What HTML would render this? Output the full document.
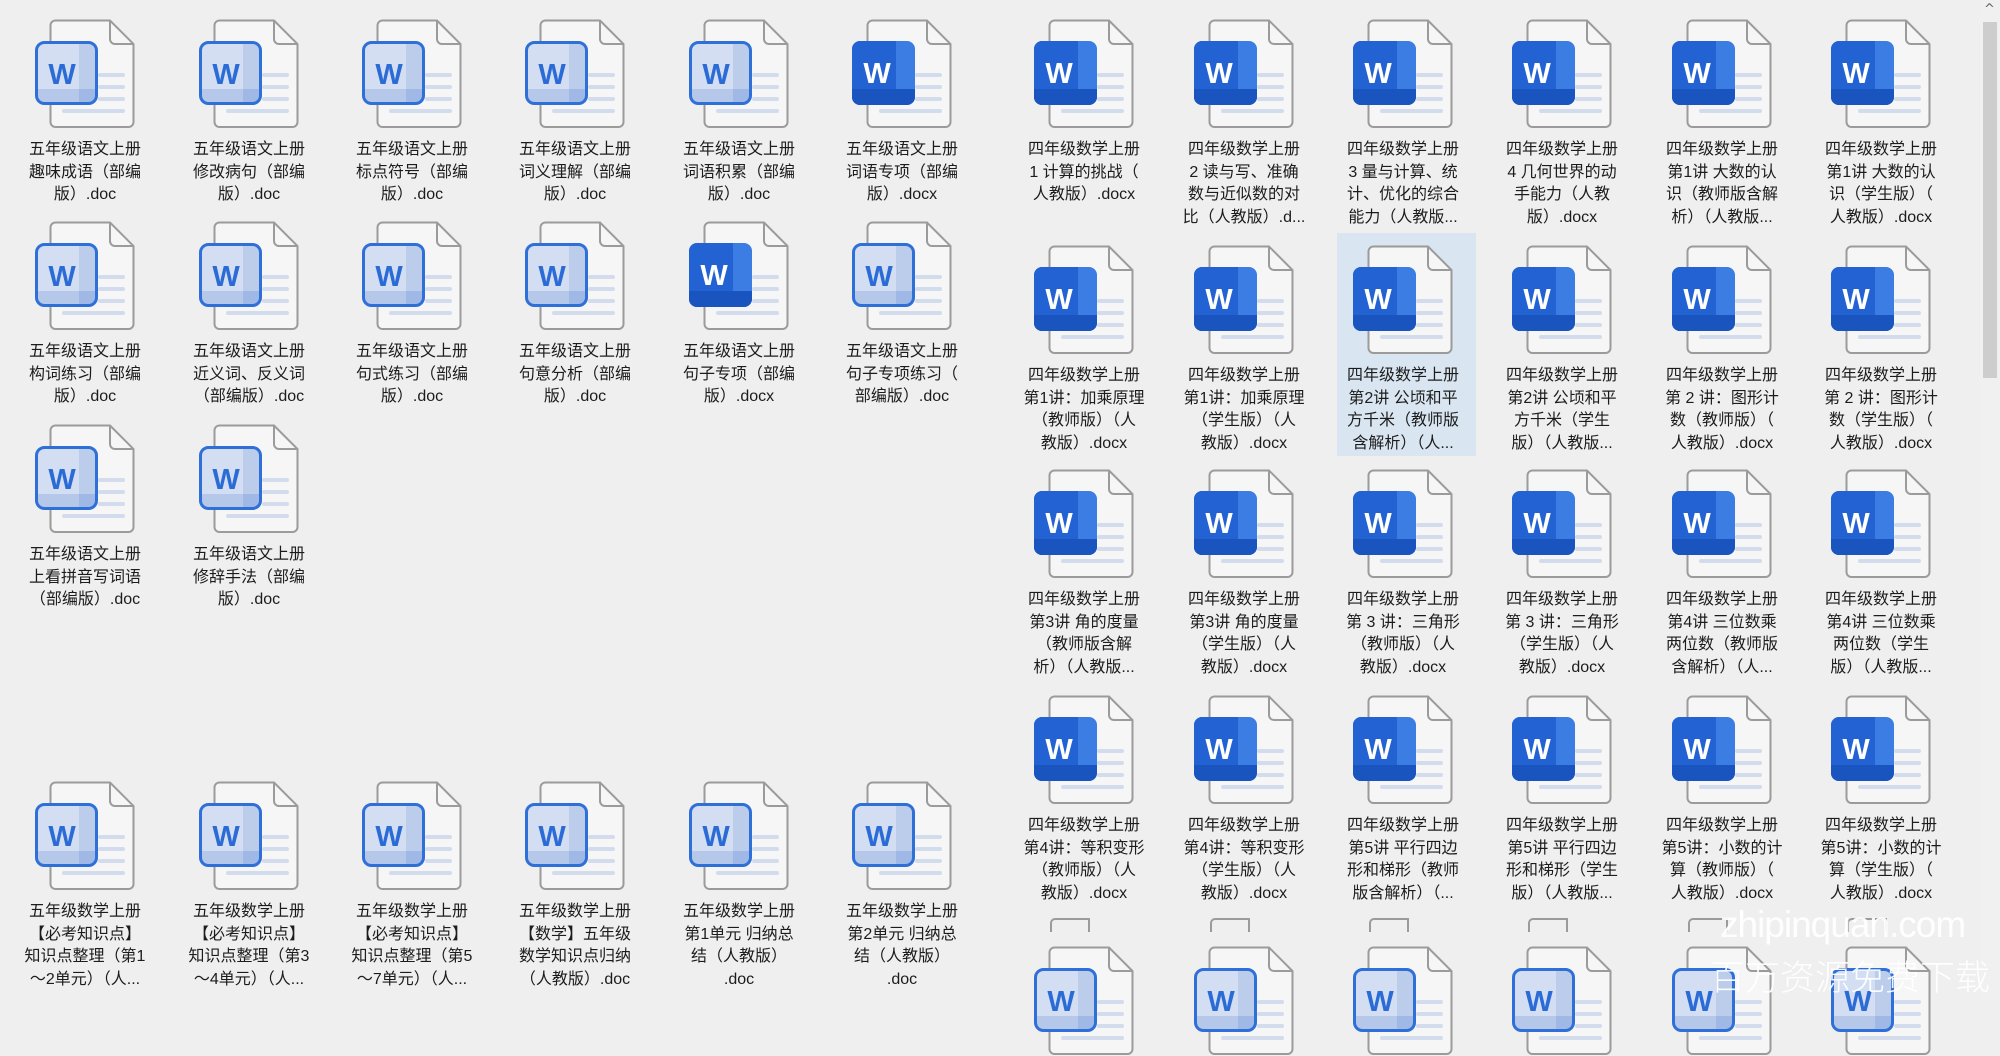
<!DOCTYPE html>
<html><head><meta charset="utf-8">
<style>
html,body{margin:0;padding:0;}
body{width:2000px;height:1000px;position:relative;overflow:hidden;background:#efefef;font-family:"Liberation Sans","Noto Sans CJK SC",sans-serif;}
.c{position:absolute;width:150px;}
.c svg{display:block;margin:0 auto;width:100px;height:110px;}
.t{margin-top:10px;text-align:center;font-size:16px;line-height:22.6px;color:#1c1c1c;white-space:nowrap;}
.hl{position:absolute;left:1337px;top:233px;width:139px;height:223px;background:#d9e6f2;}
.sb{position:absolute;left:1980px;top:0;width:20px;height:1000px;background:#f0f0f0;}
.th{position:absolute;left:1983px;top:22px;width:14px;height:356px;background:#cdcdcd;}
.wm{position:absolute;color:rgba(255,255,255,0.93);font-weight:300;white-space:nowrap;}
</style></head><body>
<svg width="0" height="0" style="position:absolute">
<defs>
<symbol id="pg" viewBox="0 0 100 110">
<path d="M20.5 1.5H75L98.5 25V103a5 5 0 0 1-5 5H20.5a5 5 0 0 1-5-5V6.5a5 5 0 0 1 5-5Z" fill="#f6f6f6" stroke="#9b9b9b" stroke-width="2"/>
<path d="M75 1.5V20a5 5 0 0 0 5 5H98.5" fill="none" stroke="#9b9b9b" stroke-width="2"/>
<rect x="63" y="54" width="27" height="4" rx="2" fill="#d3dcec"/>
<rect x="63" y="66" width="27" height="4" rx="2" fill="#d3dcec"/>
<rect x="63" y="78" width="27" height="4" rx="2" fill="#d3dcec"/>
<rect x="27" y="90" width="63" height="4" rx="2" fill="#d3dcec"/>
</symbol>
<symbol id="lw" viewBox="0 0 100 110">
<use href="#pg"/>
<rect x="1.5" y="23.5" width="60" height="61" rx="8" fill="#d3def3"/>
<rect x="44" y="25" width="16" height="58" fill="#bccdec"/>
<rect x="3" y="70" width="57" height="13" fill="#b5c8ea"/>
<rect x="44" y="70" width="16" height="13" fill="#9fb8e6"/>
<rect x="1.5" y="23.5" width="60" height="61" rx="8" fill="none" stroke="#2f6fd8" stroke-width="3"/>
<text x="27" y="65" font-family="Liberation Sans,sans-serif" font-weight="bold" font-size="29" fill="#2b6bd6" text-anchor="middle">W</text>
</symbol>
<symbol id="sw" viewBox="0 0 100 110">
<use href="#pg"/>
<rect x="0" y="22" width="63" height="64" rx="8" fill="#3b7de2"/>
<path d="M8 22H44V86H8a8 8 0 0 1-8-8V30a8 8 0 0 1 8-8Z" fill="#2262d2"/>
<path d="M0 70H63V78a8 8 0 0 1-8 8H8a8 8 0 0 1-8-8Z" fill="#1a55bf"/>
<text x="25" y="64" font-family="Liberation Sans,sans-serif" font-weight="bold" font-size="29" fill="#fff" text-anchor="middle">W</text>
</symbol>
</defs></svg>

<div class="hl"></div>

<!-- LEFT row1 -->
<div class="c" style="left:10px;top:19px"><svg><use href="#lw"/></svg><div class="t">五年级语文上册<br>趣味成语（部编<br>版）.doc</div></div>
<div class="c" style="left:174px;top:19px"><svg><use href="#lw"/></svg><div class="t">五年级语文上册<br>修改病句（部编<br>版）.doc</div></div>
<div class="c" style="left:337px;top:19px"><svg><use href="#lw"/></svg><div class="t">五年级语文上册<br>标点符号（部编<br>版）.doc</div></div>
<div class="c" style="left:500px;top:19px"><svg><use href="#lw"/></svg><div class="t">五年级语文上册<br>词义理解（部编<br>版）.doc</div></div>
<div class="c" style="left:664px;top:19px"><svg><use href="#lw"/></svg><div class="t">五年级语文上册<br>词语积累（部编<br>版）.doc</div></div>
<div class="c" style="left:827px;top:19px"><svg><use href="#sw"/></svg><div class="t">五年级语文上册<br>词语专项（部编<br>版）.docx</div></div>
<!-- LEFT row2 -->
<div class="c" style="left:10px;top:221px"><svg><use href="#lw"/></svg><div class="t">五年级语文上册<br>构词练习（部编<br>版）.doc</div></div>
<div class="c" style="left:174px;top:221px"><svg><use href="#lw"/></svg><div class="t">五年级语文上册<br>近义词、反义词<br>（部编版）.doc</div></div>
<div class="c" style="left:337px;top:221px"><svg><use href="#lw"/></svg><div class="t">五年级语文上册<br>句式练习（部编<br>版）.doc</div></div>
<div class="c" style="left:500px;top:221px"><svg><use href="#lw"/></svg><div class="t">五年级语文上册<br>句意分析（部编<br>版）.doc</div></div>
<div class="c" style="left:664px;top:221px"><svg><use href="#sw"/></svg><div class="t">五年级语文上册<br>句子专项（部编<br>版）.docx</div></div>
<div class="c" style="left:827px;top:221px"><svg><use href="#lw"/></svg><div class="t">五年级语文上册<br>句子专项练习（<br>部编版）.doc</div></div>
<!-- LEFT row3 -->
<div class="c" style="left:10px;top:424px"><svg><use href="#lw"/></svg><div class="t">五年级语文上册<br>上看拼音写词语<br>（部编版）.doc</div></div>
<div class="c" style="left:174px;top:424px"><svg><use href="#lw"/></svg><div class="t">五年级语文上册<br>修辞手法（部编<br>版）.doc</div></div>
<!-- LEFT row4 -->
<div class="c" style="left:10px;top:781px"><svg><use href="#lw"/></svg><div class="t">五年级数学上册<br>【必考知识点】<br>知识点整理（第1<br>～2单元）（人...</div></div>
<div class="c" style="left:174px;top:781px"><svg><use href="#lw"/></svg><div class="t">五年级数学上册<br>【必考知识点】<br>知识点整理（第3<br>～4单元）（人...</div></div>
<div class="c" style="left:337px;top:781px"><svg><use href="#lw"/></svg><div class="t">五年级数学上册<br>【必考知识点】<br>知识点整理（第5<br>～7单元）（人...</div></div>
<div class="c" style="left:500px;top:781px"><svg><use href="#lw"/></svg><div class="t">五年级数学上册<br>【数学】五年级<br>数学知识点归纳<br>（人教版）.doc</div></div>
<div class="c" style="left:664px;top:781px"><svg><use href="#lw"/></svg><div class="t">五年级数学上册<br>第1单元 归纳总<br>结（人教版）<br>.doc</div></div>
<div class="c" style="left:827px;top:781px"><svg><use href="#lw"/></svg><div class="t">五年级数学上册<br>第2单元 归纳总<br>结（人教版）<br>.doc</div></div>

<!-- RIGHT row1 -->
<div class="c" style="left:1009px;top:19px"><svg><use href="#sw"/></svg><div class="t">四年级数学上册<br>1 计算的挑战（<br>人教版）.docx</div></div>
<div class="c" style="left:1169px;top:19px"><svg><use href="#sw"/></svg><div class="t">四年级数学上册<br>2 读与写、准确<br>数与近似数的对<br>比（人教版）.d...</div></div>
<div class="c" style="left:1328px;top:19px"><svg><use href="#sw"/></svg><div class="t">四年级数学上册<br>3 量与计算、统<br>计、优化的综合<br>能力（人教版...</div></div>
<div class="c" style="left:1487px;top:19px"><svg><use href="#sw"/></svg><div class="t">四年级数学上册<br>4 几何世界的动<br>手能力（人教<br>版）.docx</div></div>
<div class="c" style="left:1647px;top:19px"><svg><use href="#sw"/></svg><div class="t">四年级数学上册<br>第1讲 大数的认<br>识（教师版含解<br>析）（人教版...</div></div>
<div class="c" style="left:1806px;top:19px"><svg><use href="#sw"/></svg><div class="t">四年级数学上册<br>第1讲 大数的认<br>识（学生版）（<br>人教版）.docx</div></div>
<!-- RIGHT row2 -->
<div class="c" style="left:1009px;top:245px"><svg><use href="#sw"/></svg><div class="t">四年级数学上册<br>第1讲：加乘原理<br>（教师版）（人<br>教版）.docx</div></div>
<div class="c" style="left:1169px;top:245px"><svg><use href="#sw"/></svg><div class="t">四年级数学上册<br>第1讲：加乘原理<br>（学生版）（人<br>教版）.docx</div></div>
<div class="c" style="left:1328px;top:245px"><svg><use href="#sw"/></svg><div class="t">四年级数学上册<br>第2讲 公顷和平<br>方千米（教师版<br>含解析）（人...</div></div>
<div class="c" style="left:1487px;top:245px"><svg><use href="#sw"/></svg><div class="t">四年级数学上册<br>第2讲 公顷和平<br>方千米（学生<br>版）（人教版...</div></div>
<div class="c" style="left:1647px;top:245px"><svg><use href="#sw"/></svg><div class="t">四年级数学上册<br>第 2 讲：图形计<br>数（教师版）（<br>人教版）.docx</div></div>
<div class="c" style="left:1806px;top:245px"><svg><use href="#sw"/></svg><div class="t">四年级数学上册<br>第 2 讲：图形计<br>数（学生版）（<br>人教版）.docx</div></div>
<!-- RIGHT row3 -->
<div class="c" style="left:1009px;top:469px"><svg><use href="#sw"/></svg><div class="t">四年级数学上册<br>第3讲 角的度量<br>（教师版含解<br>析）（人教版...</div></div>
<div class="c" style="left:1169px;top:469px"><svg><use href="#sw"/></svg><div class="t">四年级数学上册<br>第3讲 角的度量<br>（学生版）（人<br>教版）.docx</div></div>
<div class="c" style="left:1328px;top:469px"><svg><use href="#sw"/></svg><div class="t">四年级数学上册<br>第 3 讲：三角形<br>（教师版）（人<br>教版）.docx</div></div>
<div class="c" style="left:1487px;top:469px"><svg><use href="#sw"/></svg><div class="t">四年级数学上册<br>第 3 讲：三角形<br>（学生版）（人<br>教版）.docx</div></div>
<div class="c" style="left:1647px;top:469px"><svg><use href="#sw"/></svg><div class="t">四年级数学上册<br>第4讲 三位数乘<br>两位数（教师版<br>含解析）（人...</div></div>
<div class="c" style="left:1806px;top:469px"><svg><use href="#sw"/></svg><div class="t">四年级数学上册<br>第4讲 三位数乘<br>两位数（学生<br>版）（人教版...</div></div>
<!-- RIGHT row4 -->
<div class="c" style="left:1009px;top:695px"><svg><use href="#sw"/></svg><div class="t">四年级数学上册<br>第4讲：等积变形<br>（教师版）（人<br>教版）.docx</div></div>
<div class="c" style="left:1169px;top:695px"><svg><use href="#sw"/></svg><div class="t">四年级数学上册<br>第4讲：等积变形<br>（学生版）（人<br>教版）.docx</div></div>
<div class="c" style="left:1328px;top:695px"><svg><use href="#sw"/></svg><div class="t">四年级数学上册<br>第5讲 平行四边<br>形和梯形（教师<br>版含解析）（...</div></div>
<div class="c" style="left:1487px;top:695px"><svg><use href="#sw"/></svg><div class="t">四年级数学上册<br>第5讲 平行四边<br>形和梯形（学生<br>版）（人教版...</div></div>
<div class="c" style="left:1647px;top:695px"><svg><use href="#sw"/></svg><div class="t">四年级数学上册<br>第5讲：小数的计<br>算（教师版）（<br>人教版）.docx</div></div>
<div class="c" style="left:1806px;top:695px"><svg><use href="#sw"/></svg><div class="t">四年级数学上册<br>第5讲：小数的计<br>算（学生版）（<br>人教版）.docx</div></div>
<!-- RIGHT row5 partial -->
<div style="position:absolute;left:1050px;top:918px;width:36px;height:12px;border:2px solid #9b9b9b;border-bottom:none;border-radius:5px 0 0 0"></div>
<div style="position:absolute;left:1210px;top:918px;width:36px;height:12px;border:2px solid #9b9b9b;border-bottom:none;border-radius:5px 0 0 0"></div>
<div style="position:absolute;left:1369px;top:918px;width:36px;height:12px;border:2px solid #9b9b9b;border-bottom:none;border-radius:5px 0 0 0"></div>
<div style="position:absolute;left:1528px;top:918px;width:36px;height:12px;border:2px solid #9b9b9b;border-bottom:none;border-radius:5px 0 0 0"></div>
<div style="position:absolute;left:1688px;top:918px;width:36px;height:12px;border:2px solid #9b9b9b;border-bottom:none;border-radius:5px 0 0 0"></div>
<div style="position:absolute;left:1847px;top:918px;width:36px;height:12px;border:2px solid #9b9b9b;border-bottom:none;border-radius:5px 0 0 0"></div>
<div class="c" style="left:1009px;top:946px"><svg><use href="#lw"/></svg></div>
<div class="c" style="left:1169px;top:946px"><svg><use href="#lw"/></svg></div>
<div class="c" style="left:1328px;top:946px"><svg><use href="#lw"/></svg></div>
<div class="c" style="left:1487px;top:946px"><svg><use href="#lw"/></svg></div>
<div class="c" style="left:1647px;top:946px"><svg><use href="#lw"/></svg></div>
<div class="c" style="left:1806px;top:946px"><svg><use href="#lw"/></svg></div>

<div class="sb"></div>
<div class="th"></div>
<div style="position:absolute;left:1984px;top:2px;font-size:13px;color:#666;font-family:'DejaVu Sans',sans-serif">^</div>

<div class="wm" style="left:1720px;top:904px;font-size:37px;letter-spacing:-1px">zhipinquan.com</div>
<div class="wm" style="left:1710px;top:950px;font-size:35px;font-family:'Noto Sans CJK SC',sans-serif;font-weight:300">百万资源免费下载</div>
</body></html>
